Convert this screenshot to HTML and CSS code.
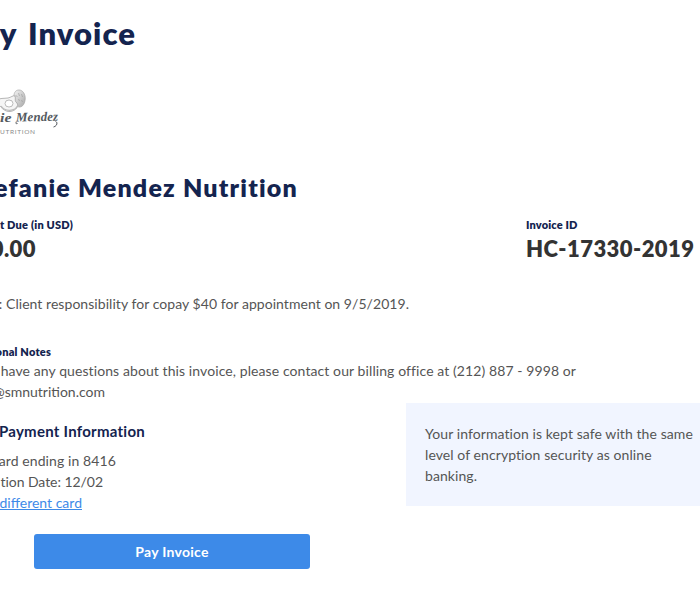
FILE: index.html
```html
<!DOCTYPE html>
<html lang="en">
<head>
<meta charset="utf-8">
<title>Pay Invoice</title>
<link rel="stylesheet" href="styles.css">
</head>
<body>
<main class="page">
  <h1 class="title">y Invoice</h1>
  <svg class="logo" viewBox="0 0 64 56" aria-label="Mendez Nutrition logo">
    <defs>
      <linearGradient id="shade" x1="0" y1="0" x2="1" y2="1">
        <stop offset="0" stop-color="#f4f4f4"/>
        <stop offset="1" stop-color="#a8a8a8"/>
      </linearGradient>
    </defs>
    <path d="M14 15C14.500 11 17 10 19 10c4 0 6.500 4.500 6.200 9-.3 4.500-2.500 8-5.700 8-3.500 0-6-4-5.500-12Z" fill="url(#shade)" stroke="#a6a6a6" stroke-width=".7"/>
    <path d="M15.500 15l2 2m1-4 1 3m2-2 1 3m-4 2 1 2m2-1 1 2" stroke="#999" stroke-width=".6"/>
    <path d="M-4 20C0 18 4 18.500 8 18c3-.5 5-3 7-2 1 3-1 5 2 7 2 3-1 8-7 8.500-5 .5-10-4-14-11.500Z" fill="#f5f5f5" stroke="#999" stroke-width=".7"/>
    <path d="M1 26c4 6 14 6 17-1" fill="none" stroke="#bbb" stroke-width="1.200"/>
    <ellipse cx="9" cy="23.500" rx="4" ry="3.500" fill="#fff" stroke="#aaa" stroke-width=".8"/>
    <text class="logo-name" x="0" y="41.500" textLength="11.500" lengthAdjust="spacingAndGlyphs">ie</text>
    <text class="logo-name" x="16" y="41.500" textLength="42" transform="rotate(-1 16 41)">Mendez</text>
    <path d="M55.500 41.500c3 1 1 5-2 5.500m-37-5c-1 1-1 2 1 1.500" fill="none" stroke="#555a60" stroke-width="1"/>
    <text class="logo-sub" x="0" y="54" textLength="35">UTRITION</text>
  </svg>
  <h2 class="provider">efanie Mendez Nutrition</h2>
  <div class="summary">
    <div class="due">
      <div class="label label-due">t Due (in USD)</div>
      <div class="value value-due">0.00</div>
    </div>
    <div class="invoice">
      <div class="label label-id">Invoice ID</div>
      <div class="value">HC-17330-2019</div>
    </div>
  </div>
  <p class="line memo">: Client responsibility for copay $40 for appointment on 9/5/2019.</p>
  <div class="label label-notes">onal Notes</div>
  <p class="line notes">have any questions about this invoice, please contact our billing office at (212) 887 - 9998 or</p>
  <p class="line email">@smnutrition.com</p>
  <div class="columns">
    <section class="payment">
      <h3 class="payment-title">Payment Information</h3>
      <p class="line card">ard ending in 8416</p>
      <p class="line expiry">tion Date: 12/02</p>
      <p class="line change"><a class="link" href="#">different card</a></p>
      <button class="pay" type="button">Pay Invoice</button>
    </section>
    <aside class="secure">Your information is kept safe with the same level of encryption security as online banking.</aside>
  </div>
</main>
</body>
</html>
```
FILE: styles.css
```css
* { box-sizing: border-box; }
body {
  margin: 0;
  background: #fff;
  color: #555;
  font: 14px/21px Lato, "Open Sans", sans-serif;
  overflow: hidden;
}
h1, h2, h3, p { margin: 0; }
.page { width: 700px; height: 603px; padding-top: 13px; overflow: hidden; }

/* Lines are right-aligned in a fixed width and run off the left edge. */
.title, .provider, .label-due, .value-due, .line, .label-notes, .payment-title {
  display: flex;
  justify-content: flex-end;
  white-space: nowrap;
}
.title { width: 136px; height: 40px; font-size: 31px; line-height: 40px; font-weight: 800; letter-spacing: 1.05px; word-spacing: 3px; color: #14244f; }
.logo { display: block; width: 64px; height: 56px; margin: 27px 0 36px; }
.logo-name { font: italic bold 13px "Liberation Serif", serif; fill: #555a60; }
.logo-sub { font: 6.5px Lato, sans-serif; fill: #8b8b8b; }
.provider { width: 298px; font-size: 25px; line-height: 30px; font-weight: 800; letter-spacing: 1.2px; color: #14244f; }
.summary { display: flex; justify-content: space-between; margin-top: 15px; }
.invoice { width: 174px; }
.label { font-size: 11px; line-height: 16px; font-weight: 800; letter-spacing: .2px; color: #14244f; }
.label-due { width: 73px; }
.label-id { letter-spacing: .15px; }
.value { margin-top: 3px; font-size: 22px; line-height: 26px; font-weight: 800; letter-spacing: .43px; color: #333; }
.value-due { width: 36px; }
.memo { width: 409px; margin-top: 31px; letter-spacing: .05px; }
.label-notes { width: 51px; margin-top: 30px; }
.notes { width: 576px; letter-spacing: .09px; }
.email { width: 105px; }
.columns { display: flex; justify-content: space-between; align-items: flex-start; margin-top: 1px; }
.payment { padding-top: 18px; }
.payment-title { width: 145px; font-size: 15px; line-height: 21px; font-weight: 700; letter-spacing: .26px; color: #14244f; }
.card { width: 116px; margin-top: 8px; letter-spacing: .1px; }
.expiry { width: 103px; letter-spacing: -.05px; }
.change { width: 82px; }
.link { color: #3d8ae8; text-decoration: underline; }
.pay {
  display: block;
  width: 276px;
  height: 35px;
  margin: 21px 0 0 34px;
  padding: 0;
  border: 0;
  border-radius: 3px;
  background: #3d8ae8;
  color: #fff;
  font: 700 14px/35px Lato, sans-serif;
  letter-spacing: .26px;
}
.secure { width: 294px; height: 103px; padding: 20px 0 20px 19px; background: #f1f5ff; letter-spacing: .08px; }
```
